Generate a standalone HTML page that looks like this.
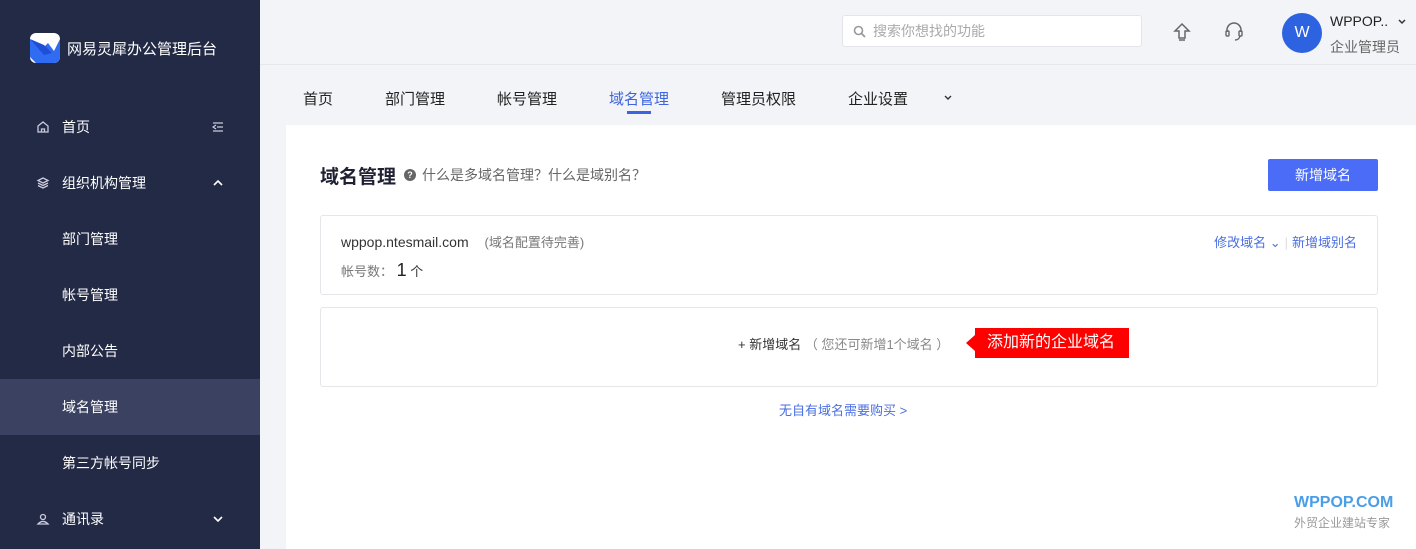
<!DOCTYPE html>
<html><head><meta charset="utf-8"><style>
*{margin:0;padding:0;box-sizing:border-box}
body{width:1416px;height:549px;overflow:hidden;background:#f3f4f7;font-family:"Liberation Sans","Noto Sans CJK SC",sans-serif;position:relative}
.sb{position:absolute;left:0;top:0;width:260px;height:549px;background:#232a45;color:#fff}
.logo{position:absolute;left:30px;top:33px;width:30px;height:30px;border-radius:6px;background:#fff;overflow:hidden}
.brand{position:absolute;left:67px;top:38px;font-size:15px;color:#fff}
.it{position:absolute;left:0;width:260px;height:56px;line-height:56px;font-size:14px;color:#fff}
.it span{position:absolute;left:62px}
.it.act{background:#3b4261}
.ic{position:absolute;left:36px;top:21px;width:14px;height:14px}
.ar{position:absolute;left:212px;top:22px}
.top{position:absolute;left:260px;top:0;right:0;height:65px;border-bottom:1px solid #e6e7eb}
.search{position:absolute;left:842px;top:15px;width:300px;height:32px;background:#fff;border:1px solid #e3e5ea;border-radius:3px;font-size:14px;color:#aaa;line-height:30px;padding-left:30px}
.tabs{position:absolute;top:88px;font-size:15px;color:#222}
.panel{position:absolute;left:286px;top:125px;right:0;bottom:0;background:#fff}
.card{position:absolute;left:320px;width:1058px;border:1px solid #e4e6ea;border-radius:3px;background:#fff}
.blue{color:#4a6ee0}
</style></head><body>
<div class="sb">
<div class="logo"><svg width="30" height="30"><path d="M0 6 L12 16 L18 10 L24 18 L30 6 L30 30 L6 30 L0 24Z" fill="#2f6cf2"/><path d="M0 6 L14 22 L22 20 L14 12Z" fill="#1f4fd6"/></svg></div>
<div class="brand">网易灵犀办公管理后台</div>
<div class="it" style="top:99px"><svg class="ic" viewBox="0 0 14 14"><path d="M2 6 L7 2 L12 6 V12 H2Z M5.5 12 V9 H8.5 V12" fill="none" stroke="#ccd" stroke-width="1.3"/></svg><span>首页</span><svg class="ar" width="12" height="12"><path d="M1 2H11M5 6H11M1 10H11M4 4 L1 6 L4 8" fill="none" stroke="#ccd" stroke-width="1.2"/></svg></div>
<div class="it" style="top:155px"><svg class="ic" viewBox="0 0 14 14"><path d="M7 2 L12 4.5 L7 7 L2 4.5Z M2 7 L7 9.5 L12 7 M2 9.5 L7 12 L12 9.5" fill="none" stroke="#ccd" stroke-width="1.3"/></svg><span>组织机构管理</span><svg class="ar" width="12" height="12"><path d="M2 8 L6 4 L10 8" fill="none" stroke="#fff" stroke-width="1.6"/></svg></div>
<div class="it" style="top:211px"><span>部门管理</span></div>
<div class="it" style="top:267px"><span>帐号管理</span></div>
<div class="it" style="top:323px"><span>内部公告</span></div>
<div class="it act" style="top:379px"><span>域名管理</span></div>
<div class="it" style="top:435px"><span>第三方帐号同步</span></div>
<div class="it" style="top:491px"><svg class="ic" viewBox="0 0 14 14"><circle cx="7" cy="5" r="2.5" fill="none" stroke="#ccd" stroke-width="1.3"/><path d="M2 12 Q7 7 12 12Z" fill="none" stroke="#ccd" stroke-width="1.3"/></svg><span>通讯录</span><svg class="ar" width="12" height="12"><path d="M2 4 L6 8 L10 4" fill="none" stroke="#fff" stroke-width="1.6"/></svg></div>
</div>
<div class="top"></div>
<div class="search"><svg style="position:absolute;left:10px;top:9px" width="13" height="13"><circle cx="5.5" cy="5.5" r="4" fill="none" stroke="#999" stroke-width="1.6"/><path d="M8.5 8.5 L12 12" stroke="#999" stroke-width="1.8"/></svg>搜索你想找的功能</div>
<svg style="position:absolute;left:1173px;top:22px" width="18" height="20"><path d="M9 2 L16 9 H12 V16 H6 V9 H2Z" fill="none" stroke="#666" stroke-width="1.5"/><path d="M6 18 H12" stroke="#666" stroke-width="1.5"/></svg>
<svg style="position:absolute;left:1224px;top:21px" width="20" height="22"><path d="M3 11 V9 A7 7 0 0 1 17 9 V11" fill="none" stroke="#666" stroke-width="1.5"/><rect x="2" y="10" width="3" height="5" rx="1" fill="none" stroke="#666" stroke-width="1.4"/><rect x="15" y="10" width="3" height="5" rx="1" fill="none" stroke="#666" stroke-width="1.4"/><path d="M16 15 Q15 19 11 19" fill="none" stroke="#666" stroke-width="1.4"/></svg>
<div style="position:absolute;left:1282px;top:13px;width:40px;height:40px;border-radius:50%;background:#2d62e0;color:#fff;font-size:16px;text-align:center;line-height:40px">W</div>
<div style="position:absolute;left:1330px;top:13px;font-size:14px;color:#222">WPPOP..</div>
<svg style="position:absolute;left:1397px;top:18px" width="10" height="8"><path d="M2 2 L5 5 L8 2" fill="none" stroke="#333" stroke-width="1.5"/></svg>
<div style="position:absolute;left:1330px;top:37px;font-size:14px;color:#666">企业管理员</div>
<div class="tabs" style="left:303px">首页</div>
<div class="tabs" style="left:385px">部门管理</div>
<div class="tabs" style="left:497px">帐号管理</div>
<div class="tabs" style="left:609px;color:#3d64e0">域名管理</div>
<div style="position:absolute;left:627px;top:111px;width:24px;height:3px;background:#3d64e0"></div>
<div class="tabs" style="left:721px">管理员权限</div>
<div class="tabs" style="left:848px">企业设置</div>
<svg style="position:absolute;left:943px;top:94px" width="10" height="8"><path d="M2 2 L5 5 L8 2" fill="none" stroke="#333" stroke-width="1.4"/></svg>
<div class="panel"></div>
<div style="position:absolute;left:320px;top:162px;font-size:19px;font-weight:bold;color:#1f2233">域名管理</div>
<div style="position:absolute;left:404px;top:169px;width:12px;height:12px;border-radius:50%;background:#666;color:#fff;font-size:9px;text-align:center;line-height:12px;font-weight:bold">?</div>
<div style="position:absolute;left:422px;top:165px;font-size:14px;color:#666">什么是多域名管理？什么是域别名？</div>
<div style="position:absolute;left:1268px;top:159px;width:110px;height:32px;background:#4a6cf7;color:#fff;font-size:14px;text-align:center;line-height:32px;border-radius:2px">新增域名</div>
<div class="card" style="top:215px;height:80px">
<div style="position:absolute;left:20px;top:16px;font-size:14px;color:#333">wppop.ntesmail.com <span style="font-size:13px;color:#777;margin-left:12px">(域名配置待完善)</span></div>
<div style="position:absolute;left:20px;top:44px;font-size:13px;color:#777">帐号数： <span style="font-size:18px;color:#222">1</span> <span style="color:#333">个</span></div>
<div class="blue" style="position:absolute;right:20px;top:16px;font-size:13px">修改域名 ⌄<span style="color:#ddd;margin:0 4px">|</span>新增域别名</div>
</div>
<div class="card" style="top:307px;height:80px">
<div style="position:absolute;left:417px;top:26px;font-size:13px;color:#333">+ 新增域名 <span style="color:#888">（ 您还可新增1个域名 ）</span></div>
<div style="position:absolute;left:654px;top:20px;width:154px;height:30px;background:#f00;color:#fff;font-size:16px;line-height:30px;padding-left:12px">添加新的企业域名</div>
<div style="position:absolute;left:645px;top:27px;width:0;height:0;border:8px solid transparent;border-right:9px solid #f00;border-left:0"></div>
</div>
<div class="blue" style="position:absolute;left:779px;top:400px;font-size:13px">无自有域名需要购买 &gt;</div>
<div style="position:absolute;left:1294px;top:494px;font-size:16px;font-weight:bold;color:#4a9ee8">WPPOP.COM</div>
<div style="position:absolute;left:1294px;top:514px;font-size:12px;color:#999">外贸企业建站专家</div>
</body></html>
